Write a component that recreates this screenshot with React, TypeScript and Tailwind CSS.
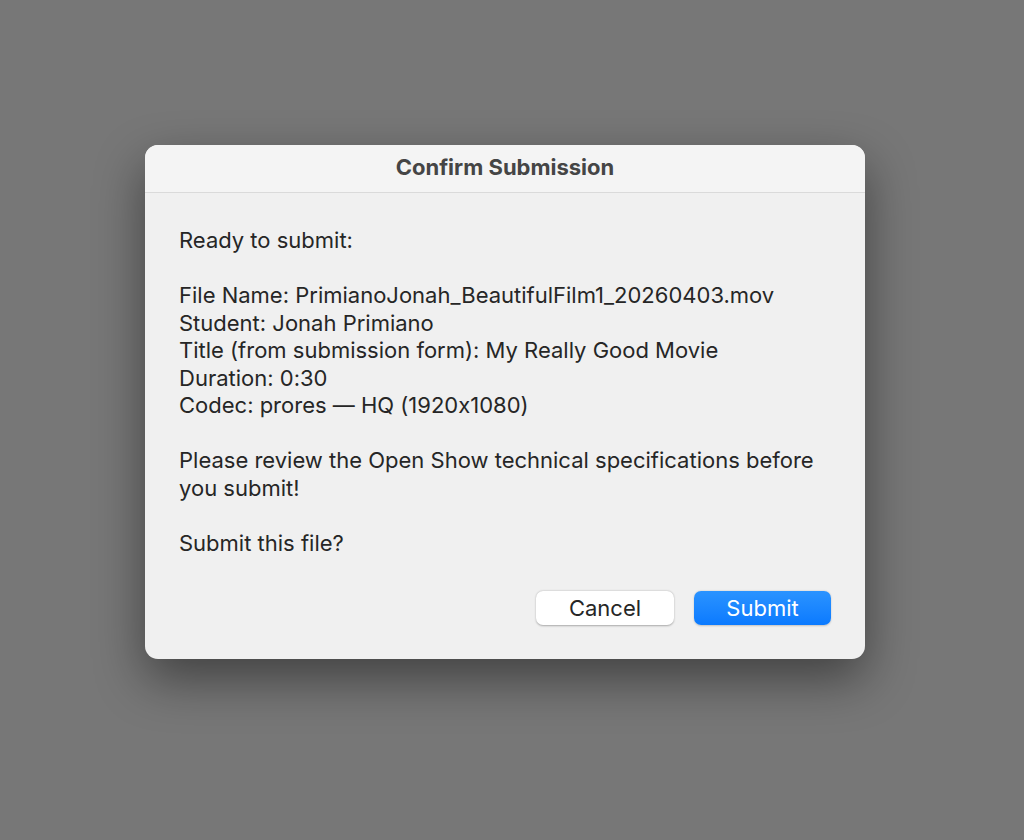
import React from "react";

export default function App() {
  const font = { fontFamily: "Inter, 'Noto Sans', 'Liberation Sans', sans-serif" };
  return (
    <div className="w-[1024px] h-[840px] bg-[#777777] flex justify-start pl-[145px] pt-[145px] [font-feature-settings:'calt'_0]" style={font}>
      <div className="w-[720px] h-[514px] rounded-[13px] bg-[#f0f0f0] shadow-[0_20px_50px_rgba(0,0,0,0.45)] overflow-hidden flex flex-col">
        <div className="h-[48px] bg-[#f4f4f4] border-b border-[#dadada] flex items-center justify-center">
          <span className="text-[22px] font-bold text-[#454545] -mt-[2px]">Confirm Submission</span>
        </div>
        <div className="flex-1 flex flex-col px-[34px] pt-[34px] pb-[34px]">
          <div className="text-[22px] leading-[27.5px] text-[#262626]">
            <p>Ready to submit:</p>
            <p>&nbsp;</p>
            <p>File Name: PrimianoJonah_BeautifulFilm1_20260403.mov</p>
            <p>Student: Jonah Primiano</p>
            <p>Title (from submission form): My Really Good Movie</p>
            <p>Duration: 0:30</p>
            <p>Codec: prores — HQ (1920x1080)</p>
            <p>&nbsp;</p>
            <p>Please review the Open Show technical specifications before<br />you submit!</p>
            <p>&nbsp;</p>
            <p>Submit this file?</p>
          </div>
          <div className="mt-auto flex justify-end gap-[20px]">
            <button className="w-[138px] h-[34px] rounded-[7px] bg-white text-[22px] text-[#262626] shadow-[0_0.5px_2px_rgba(0,0,0,0.3)]">Cancel</button>
            <button className="w-[137px] h-[34px] rounded-[7px] bg-gradient-to-b from-[#2a93ff] to-[#0a7aff] text-[22px] text-white shadow-[0_0.5px_2px_rgba(0,0,0,0.2)]">Submit</button>
          </div>
        </div>
      </div>
    </div>
  );
}
